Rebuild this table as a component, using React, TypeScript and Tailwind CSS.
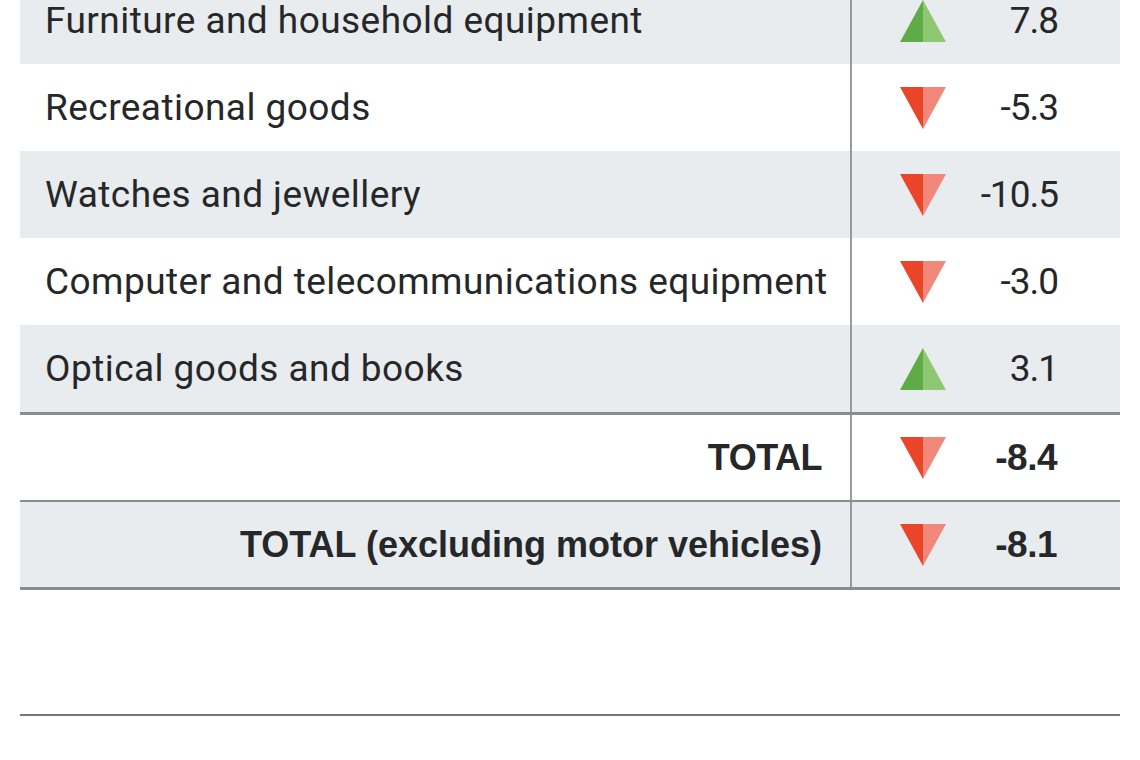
import React from "react";

type Row = { label: string; value: string; up: boolean; shaded: boolean };

const rows: Row[] = [
  { label: "Furniture and household equipment", value: "7.8", up: true, shaded: true },
  { label: "Recreational goods", value: "-5.3", up: false, shaded: false },
  { label: "Watches and jewellery", value: "-10.5", up: false, shaded: true },
  { label: "Computer and telecommunications equipment", value: "-3.0", up: false, shaded: false },
  { label: "Optical goods and books", value: "3.1", up: true, shaded: true },
];

function Arrow({ up }: { up: boolean }) {
  if (up) {
    return (
      <svg width="46" height="42" viewBox="0 0 46 42">
        <polygon points="23,0 0,42 23,42" fill="#5eab47" />
        <polygon points="23,0 46,42 23,42" fill="#8fc873" />
      </svg>
    );
  }
  return (
    <svg width="46" height="42" viewBox="0 0 46 42">
      <polygon points="0,0 23,0 23,42" fill="#ea4429" />
      <polygon points="23,0 46,0 23,42" fill="#f2887a" />
    </svg>
  );
}

const font = { fontFamily: '"Roboto", "Liberation Sans", sans-serif' };
const boldFont = { fontFamily: '"Liberation Sans", "Roboto", sans-serif' };

function ValueCell({ up, value, bold }: { up: boolean; value: string; bold?: boolean }) {
  return (
    <div className="flex-1 min-w-0 flex items-center">
      <div className="w-[141px] shrink-0 flex justify-center pl-[1px]">
        <Arrow up={up} />
      </div>
      {bold ? (
        <div
          className="flex-1 min-w-0 flex justify-end pr-[63px] text-[37px] font-bold tracking-[-0.5px] whitespace-nowrap"
          style={boldFont}
        >
          <span>{value}</span>
        </div>
      ) : (
        <div
          className="flex-1 min-w-0 flex justify-end pr-[62px] text-[37px] tracking-[-1px] whitespace-nowrap"
          style={font}
        >
          <span>{value}</span>
        </div>
      )}
    </div>
  );
}

export default function App() {
  return (
    <div className="w-[1140px] h-[760px] bg-white overflow-hidden text-[#262729]">
      <div className="mx-[20px] mt-[-23px]">
        {rows.map((r, i) => (
          <div
            key={i}
            className={`flex h-[87px] ${r.shaded ? "bg-[#e9ecef]" : "bg-white"}`}
          >
            <div
              className="w-[830px] shrink-0 flex items-center pl-[25px] text-[37px] tracking-[0.45px] whitespace-nowrap"
              style={font}
            >
              {r.label}
            </div>
            <div className="w-[2px] shrink-0 bg-[#9a9a9a]" />
            <ValueCell up={r.up} value={r.value} />
          </div>
        ))}
        <div className="h-[3px] bg-[#8c8c8c]" />
        <div className="flex h-[85px] bg-white">
          <div
            className="w-[830px] shrink-0 flex items-center justify-end pr-[28px] text-[36px] font-bold tracking-[-0.5px]"
            style={boldFont}
          >
            TOTAL
          </div>
          <div className="w-[2px] shrink-0 bg-[#9a9a9a]" />
          <ValueCell up={false} value="-8.4" bold />
        </div>
        <div className="h-[2px] bg-[#8c8c8c]" />
        <div className="flex h-[85px] bg-[#e9ecef]">
          <div
            className="w-[830px] shrink-0 flex items-center justify-end pr-[28px] text-[36px] font-bold tracking-[0px] whitespace-nowrap"
            style={boldFont}
          >
            TOTAL (excluding motor vehicles)
          </div>
          <div className="w-[2px] shrink-0 bg-[#9a9a9a]" />
          <ValueCell up={false} value="-8.1" bold />
        </div>
        <div className="h-[3px] bg-[#8c8c8c]" />
        <div className="h-[124px]" />
        <div className="h-[2px] bg-[#777777]" />
      </div>
    </div>
  );
}
